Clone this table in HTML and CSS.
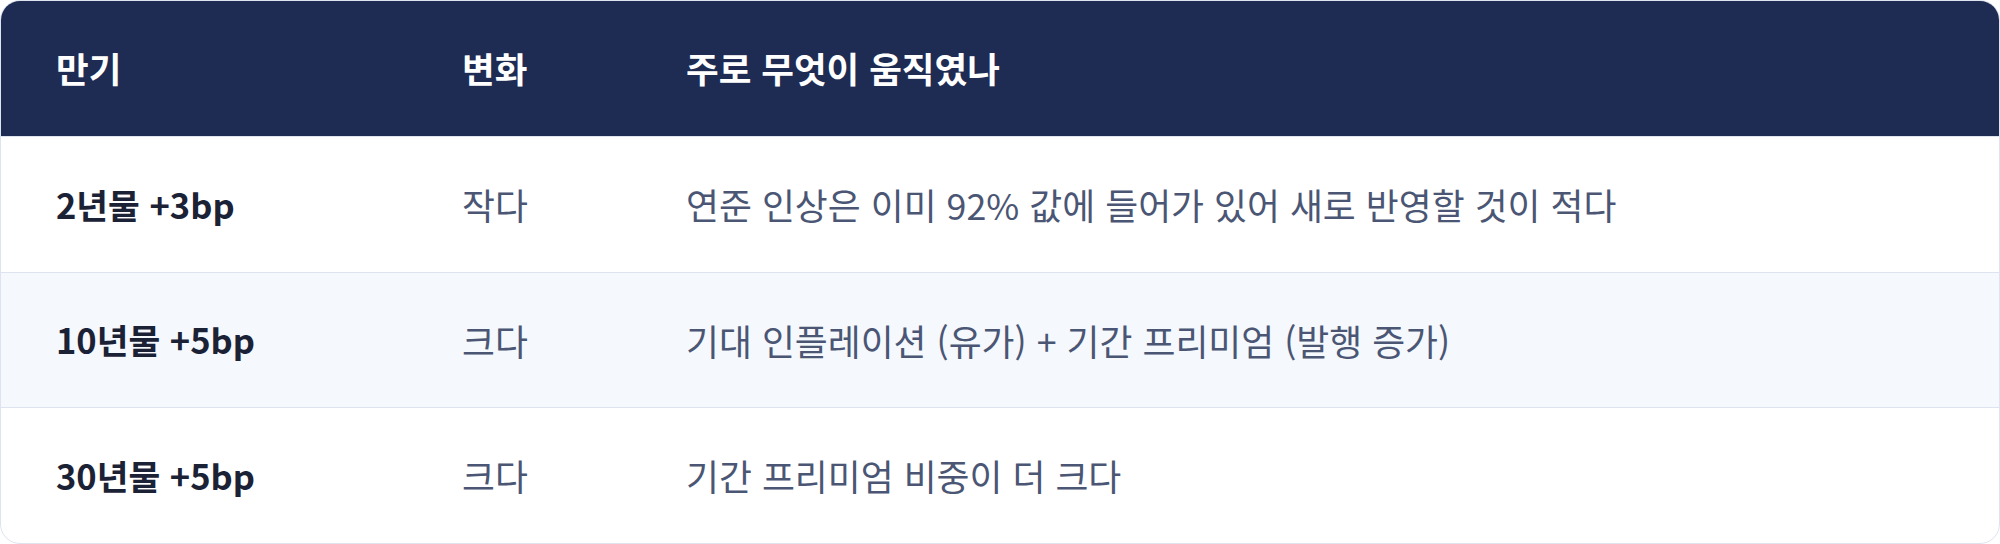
FILE: index.html
```html
<!DOCTYPE html>
<html lang="ko">
<head>
<meta charset="utf-8">
<link rel="stylesheet" href="styles.css">
</head>
<body>
<div class="table">
  <div class="head">
    <div class="cell">만기</div>
    <div class="cell">변화</div>
    <div class="cell">주로 무엇이 움직였나</div>
  </div>
  <div class="row">
    <div class="cell term">2년물 +3bp</div>
    <div class="cell">작다</div>
    <div class="cell">연준 인상은 이미 92% 값에 들어가 있어 새로 반영할 것이 적다</div>
  </div>
  <div class="row alt">
    <div class="cell term">10년물 +5bp</div>
    <div class="cell">크다</div>
    <div class="cell">기대 인플레이션 (유가) + 기간 프리미엄 (발행 증가)</div>
  </div>
  <div class="row">
    <div class="cell term">30년물 +5bp</div>
    <div class="cell">크다</div>
    <div class="cell">기간 프리미엄 비중이 더 크다</div>
  </div>
</div>
</body>
</html>
```
FILE: styles.css
```css
html, body {
  margin: 0;
  padding: 0;
  background: #ffffff;
}
body {
  font-family: "Noto Sans CJK KR", "Noto Sans", sans-serif;
}
.table {
  width: 2000px;
  height: 544px;
  box-sizing: border-box;
  border: 1px solid #dde3ef;
  border-radius: 20px;
  overflow: hidden;
  display: flex;
  flex-direction: column;
}
.head, .row {
  display: grid;
  grid-template-columns: 406px 224px 1fr;
  align-items: center;
}
.head {
  height: 135px;
  flex: none;
  background: #1e2b52;
  color: #ffffff;
  font-weight: 700;
  font-size: 35.5px;
}
.row {
  flex: 1;
  border-top: 1px solid #dde3ef;
  color: #4a5674;
  font-size: 35.8px;
}
.row.alt {
  background: #f5f8fd;
}
.cell {
  padding-left: 55px;
  white-space: nowrap;
  line-height: 1.2;
}
.term {
  color: #1b2236;
  font-weight: 700;
  font-size: 34.5px;
}
```
